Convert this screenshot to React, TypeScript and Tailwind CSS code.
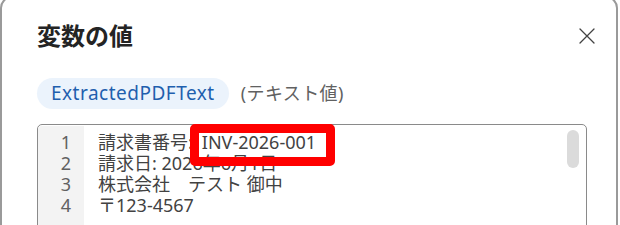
const LINES: React.ReactNode[] = [
  <>
    請求書番号:<span className="ml-[9px]">INV-2026-001</span>
  </>,
  "請求日: 2026年6月1日",
  "株式会社　テスト 御中",
  "〒123-4567",
];

export default function App() {
  return (
    <div
      className="h-[225px] w-[620px] overflow-hidden bg-white"
      style={{ fontFamily: '"Noto Sans", "Noto Sans CJK JP", sans-serif' }}
    >
      <div className="-mt-[4px] h-[260px] w-[618px] rounded-[12px] border-2 border-[#9a9a9a] bg-white pl-[35px] pr-[29px] pt-[22px]">
        {/* Header */}
        <div className="flex h-[32px] items-center justify-between">
          <h2 className="text-[24px] font-semibold leading-[32px] text-[#242424]">変数の値</h2>
          <button className="-mr-[8px] flex h-[16px] w-[16px] items-center justify-center text-[#424242]">
            <svg width="16" height="16" viewBox="0 0 16 16" fill="none">
              <path d="M1 1L15 15M15 1L1 15" stroke="currentColor" strokeWidth="1.3" strokeLinecap="round" />
            </svg>
          </button>
        </div>

        {/* Variable name + type */}
        <div className="mt-[26px] flex items-center">
          <span className="rounded-full bg-[#ebf3fc] px-[14px] text-[19px] leading-[31px] tracking-[0.5px] text-[#1f5fae]">
            ExtractedPDFText
          </span>
          <span className="ml-[12px] text-[18px] leading-[31px] tracking-[0.4px] text-[#616161]">(テキスト値)</span>
        </div>

        {/* Value viewer */}
        <div className="relative mt-[15px] flex h-[140px] rounded-[5px] border-[1.5px] border-[#8a8a8a] pt-[1px]">
          <div className="w-[46px] rounded-tl-[4px] bg-[#f3f3f3] pt-[6px] pr-[13px] text-right text-[18px] leading-[21px] text-[#616161]">
            {LINES.map((_, i) => (
              <div key={i}>{i + 1}</div>
            ))}
          </div>
          <div className="flex-1 pt-[6px] pl-[14px] text-[18px] leading-[21px] text-[#424242]">
            {LINES.map((l, i) => (
              <div key={i} className="whitespace-pre">{l}</div>
            ))}
          </div>

          {/* Scrollbar thumb */}
          <div className="absolute right-[7px] top-[5px] h-[38px] w-[12px] rounded-full bg-[#dbdbdb]" />

          {/* Highlight annotation */}
          <div className="absolute left-[152px] top-[-1px] h-[42px] w-[145px] rounded-[5px] border-[9px] border-[#ff0000]" />
        </div>
      </div>
    </div>
  );
}
